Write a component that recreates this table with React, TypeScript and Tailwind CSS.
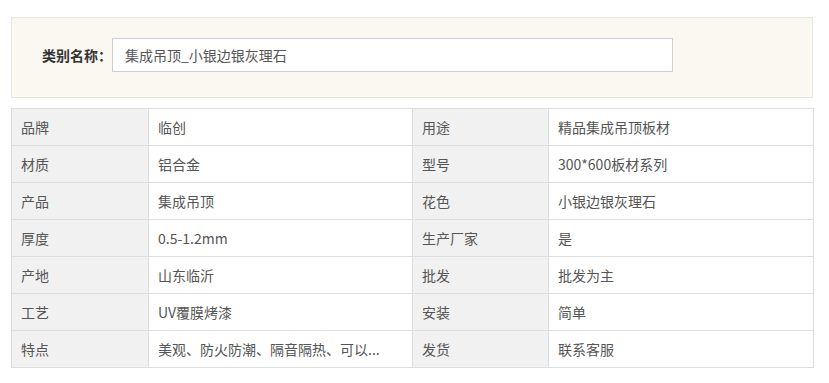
const rows: [string, string, string, string][] = [
  ["品牌", "临创", "用途", "精品集成吊顶板材"],
  ["材质", "铝合金", "型号", "300*600板材系列"],
  ["产品", "集成吊顶", "花色", "小银边银灰理石"],
  ["厚度", "0.5-1.2mm", "生产厂家", "是"],
  ["产地", "山东临沂", "批发", "批发为主"],
  ["工艺", "UV覆膜烤漆", "安装", "简单"],
  ["特点", "美观、防火防潮、隔音隔热、可以...", "发货", "联系客服"],
];

export default function App() {
  return (
    <div
      className="w-[829px] h-[383px] bg-white pt-[17px] pl-[11px] text-[14px] text-[#444]"
      style={{ fontFamily: '"Microsoft YaHei", "Noto Sans CJK SC", sans-serif' }}
    >
      <div className="w-[802px] h-[81px] border border-[#e8e6e1] bg-[#fbf8f1] flex items-start pt-[20px] pl-[30px]">
        <span className="w-[70px] h-[34px] flex items-center font-bold text-[#333]">类别名称：</span>
        <div className="w-[561px] h-[34px] border border-[#cfcfcf] bg-white flex items-center pl-[12px] text-[#555]">
          集成吊顶_小银边银灰理石
        </div>
      </div>

      <table className="mt-[10px] w-[802px] border-collapse table-fixed">
        <colgroup>
          <col className="w-[137px]" />
          <col className="w-[264px]" />
          <col className="w-[136px]" />
          <col className="w-[265px]" />
        </colgroup>
        <tbody>
          {rows.map((r) => (
            <tr key={r[0]} className="h-[37px]">
              <td className="border border-[#dddddd] bg-[#f1f1f1] pl-[9px] text-[#555]">{r[0]}</td>
              <td className="border border-[#dddddd] pl-[9px] text-[#555]">{r[1]}</td>
              <td className="border border-[#dddddd] bg-[#f1f1f1] pl-[9px] text-[#555]">{r[2]}</td>
              <td className="border border-[#dddddd] pl-[9px] text-[#555]">{r[3]}</td>
            </tr>
          ))}
        </tbody>
      </table>
    </div>
  );
}
